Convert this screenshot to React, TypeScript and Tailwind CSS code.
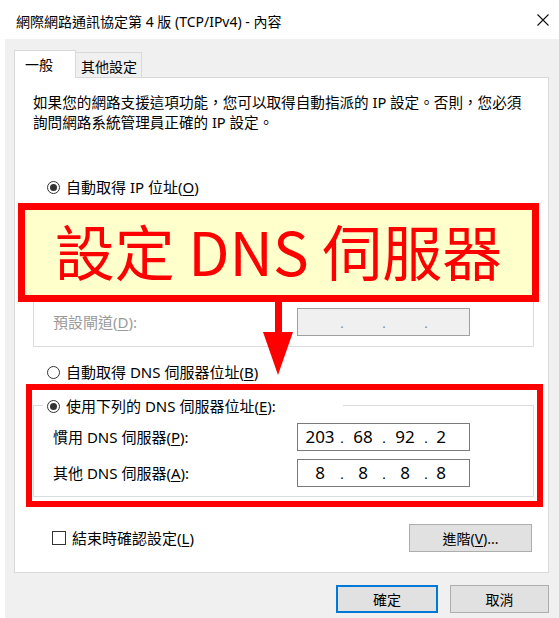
import React from "react";

const U = ({ c }: { c: string }) => <span className="underline underline-offset-2">{c}</span>;

const Radio = ({ on }: { on?: boolean }) => (
  <span className="w-[13px] h-[13px] rounded-full border border-[#333] bg-white flex items-center justify-center shrink-0">
    {on && <span className="w-[7px] h-[7px] rounded-full bg-[#333]" />}
  </span>
);

const IpBox = ({ cells, disabled }: { cells?: string[]; disabled?: boolean }) => {
  const c = cells ?? ["", "", "", ""];
  return (
    <div
      className={
        "w-[173px] h-[28px] border flex items-center pl-[2px] text-[17px] " +
        (disabled ? "bg-[#f0f0f0] border-[#a0a0a0] text-[#888]" : "bg-white border-[#7a7a7a] text-black")
      }
    >
      <span className="w-[40px] text-center">{c[0]}</span>
      <span className="w-[4px] text-center text-[13px] translate-y-[2px]">.</span>
      <span className="w-[38px] text-center">{c[1]}</span>
      <span className="w-[4px] text-center text-[13px] translate-y-[2px]">.</span>
      <span className="w-[38px] text-center">{c[2]}</span>
      <span className="w-[4px] text-center text-[13px] translate-y-[2px]">.</span>
      <span className="w-[26px] text-center">{c[3]}</span>
    </div>
  );
};

const Row = ({ label, disabled, cells }: { label: React.ReactNode; disabled?: boolean; cells?: string[] }) => (
  <div className="flex items-center h-[28px]">
    <span className={"w-[244px] " + (disabled ? "text-[#9a9a9a]" : "text-black")}>{label}</span>
    <IpBox cells={cells} disabled={disabled} />
  </div>
);

const Btn = ({ children, w, primary }: { children: React.ReactNode; w: string; primary?: boolean }) => (
  <div
    className={
      "h-[28px] flex items-center justify-center bg-[#e1e1e1] text-[14px] " +
      w +
      (primary ? " border-2 border-[#0078d7]" : " border border-[#adadad]")
    }
  >
    {children}
  </div>
);

export default function App() {
  return (
    <div className="w-[559px] h-[618px] bg-white relative overflow-hidden text-black font-['Noto_Sans','Noto_Sans_CJK_TC',sans-serif] text-[15px]">
      {/* Title bar */}
      <div className="h-[39px] flex items-center justify-between pl-[16px] pr-[10px] pt-[4px]">
        <span className="text-[14px]">網際網路通訊協定第 4 版 (TCP/IPv4) - 內容</span>
        <svg width="12" height="12" viewBox="0 0 12 12" className="-mt-[4px]">
          <path d="M0.5 0.5 L11.5 11.5 M11.5 0.5 L0.5 11.5" stroke="#111" strokeWidth="1.1" fill="none" />
        </svg>
      </div>

      {/* Body */}
      <div className="ml-[5px] h-[579px] bg-[#f0f0f0] pt-[11px] pl-[9px] pr-[10px]">
        {/* Tabs */}
        <div className="flex items-end h-[27px] text-[14px]">
          <div className="w-[62px] h-[28px] -mb-px relative z-10 bg-white border border-b-0 border-[#d9d9d9] flex items-center pl-[10px]">
            一般
          </div>
          <div className="w-[66px] h-[25px] bg-[#f0f0f0] border-t border-r border-[#d9d9d9] flex items-center pl-[5px] pt-[3px]">
            其他設定
          </div>
        </div>

        {/* Panel */}
        <div className="w-[535px] h-[496px] bg-white border border-[#d9d9d9] pl-[18px] pr-[14px] pt-[14px]">
          <div className="leading-[20px] whitespace-nowrap text-[14.6px]">
            <div>如果您的網路支援這項功能，您可以取得自動指派的 IP 設定。否則，您必須</div>
            <div>詢問網路系統管理員正確的 IP 設定。</div>
          </div>

          <div className="mt-[45px] h-[20px] flex items-center pl-[14px] gap-[6px]">
            <Radio on />
            <span>
              自動取得 IP 位址(<U c="O" />)
            </span>
          </div>

          {/* IP group (upper rows lie under the callout) */}
          <div className="mt-[19px] h-[131px] border border-[#dcdcdc] pt-[19px] pl-[19px] flex flex-col gap-[8px]">
            <div className="h-[28px]" />
            <div className="h-[28px]" />
            <Row disabled label={<>預設閘道(<U c="D" />):</>} />
          </div>

          <div className="mt-[15px] h-[20px] flex items-center pl-[14px] gap-[6px]">
            <Radio />
            <span>
              自動取得 DNS 伺服器位址(<U c="B" />)
            </span>
          </div>

          {/* DNS group */}
          <div className="mt-[23px] h-[92px] relative border border-[#dcdcdc] pt-[17px] pl-[19px] flex flex-col gap-[8px]">
            <div className="absolute -top-[10px] left-[9px] w-[300px] h-[20px] bg-white pl-[4px] flex items-center gap-[6px]">
              <Radio on />
              <span>
                使用下列的 DNS 伺服器位址(<U c="E" />):
              </span>
            </div>
            <Row label={<>慣用 DNS 伺服器(<U c="P" />):</>} cells={["203", "68", "92", "2"]} />
            <Row label={<>其他 DNS 伺服器(<U c="A" />):</>} cells={["8", "8", "8", "8"]} />
          </div>

          <div className="mt-[27px] h-[28px] flex items-center justify-between pr-[2px]">
            <div className="flex items-center pl-[19px] gap-[6px]">
              <span className="w-[14px] h-[14px] border border-[#333] bg-white" />
              <span>
                結束時確認設定(<U c="L" />)
              </span>
            </div>
            <Btn w="w-[123px]">
              進階(<U c="V" />)...
            </Btn>
          </div>
        </div>

        {/* Buttons */}
        <div className="mt-[12px] w-[535px] flex justify-end gap-[12px]">
          <Btn w="w-[102px]" primary>
            確定
          </Btn>
          <Btn w="w-[99px]">取消</Btn>
        </div>
      </div>

      {/* Annotation: callout */}
      <div className="absolute left-[18px] top-[203px] w-[521px] h-[99px] border-[7px] border-[#ff0000] bg-[#ffffcc] flex items-center justify-center">
        <span className="text-[60px] leading-none font-normal text-[#ff0000] -translate-y-[3px] font-['Noto_Sans_CJK_TC','Noto_Sans',sans-serif] whitespace-nowrap">
          設定 DNS 伺服器
        </span>
      </div>

      {/* Annotation: arrow */}
      <svg className="absolute left-[262px] top-[300px]" width="33" height="78" viewBox="0 0 33 78">
        <rect x="13" y="0" width="7" height="33" fill="#ff0000" />
        <polygon points="1,32 31,32 16,75" fill="#ff0000" />
      </svg>

      {/* Annotation: DNS box */}
      <div className="absolute left-[26px] top-[384px] w-[517px] h-[123px] border-[6px] border-[#ff0000]" />
    </div>
  );
}
